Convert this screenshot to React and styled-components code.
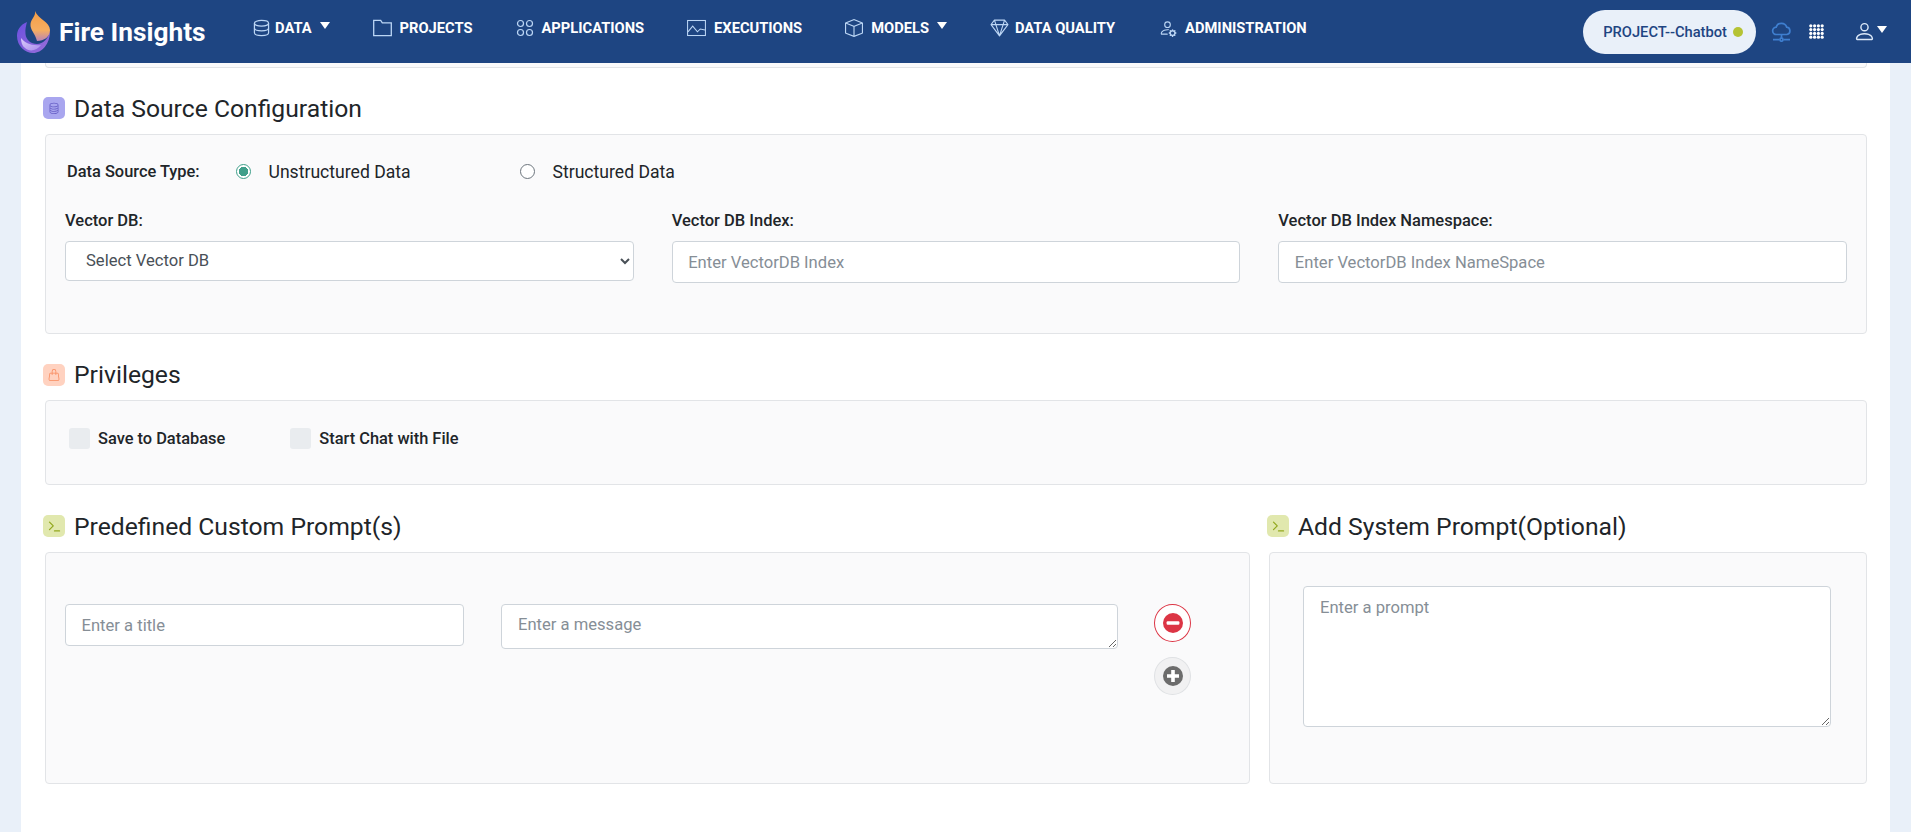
import React from 'react'
import styled, { createGlobalStyle } from 'styled-components'
import { BsBox, BsGem, BsPersonGear, BsPerson, BsHandbag, BsDatabase } from 'react-icons/bs'
import { Terminal } from 'lucide-react'

const GlobalStyle = createGlobalStyle`
  html, body {
    margin: 0;
    height: 100%;
    overflow: hidden;
    background: #e9f0f9;
    font-family: Roboto, "Liberation Sans", sans-serif;
    color: #212529;
  }
  * {
    box-sizing: border-box;
  }
`

function DataIcon() {
  return (
    <svg viewBox="0 0 18 18" fill="none" stroke="currentColor" strokeWidth="1.3">
      <ellipse cx="9" cy="4" rx="7.5" ry="3" />
      <path d="M1.5 4v10c0 1.7 3.4 3 7.5 3s7.5-1.3 7.5-3V4" />
      <path d="M1.5 9c0 1.7 3.4 3 7.5 3s7.5-1.3 7.5-3" />
    </svg>
  )
}

function FolderIcon() {
  return (
    <svg viewBox="0 0 19 18" fill="none" stroke="currentColor" strokeWidth="1.3">
      <path d="M.7 16.6V1.4h7l1.6 2.4h9v12.8z" />
    </svg>
  )
}

function AppsIcon() {
  return (
    <svg viewBox="0 0 18 18" fill="none" stroke="currentColor" strokeWidth="1.2">
      <circle cx="4.5" cy="4.5" r="3" />
      <circle cx="13.5" cy="4.5" r="3" />
      <circle cx="4.5" cy="13.5" r="3" />
      <circle cx="13.5" cy="13.5" r="3" />
    </svg>
  )
}

function ChartIcon() {
  return (
    <svg viewBox="0 0 20 18" fill="none" stroke="currentColor" strokeWidth="1.1">
      <rect x="0.6" y="1.1" width="18.8" height="15.8" />
      <path d="M1 13l5-6 5 6 3-3 5 1" />
    </svg>
  )
}

function MinusIcon() {
  return (
    <svg viewBox="0 0 20 20">
      <circle cx="10" cy="10" r="10" fill="currentColor" />
      <rect x="3.600" y="8.200" width="12.800" height="3.600" rx="1" fill="#fff" />
    </svg>
  )
}

function PlusIcon() {
  return (
    <svg viewBox="0 0 20 20">
      <circle cx="10" cy="10" r="10" fill="currentColor" />
      <path d="M8.200 4h3.600v4.200H16v3.600h-4.200V16H8.200v-4.200H4V8.200h4.200z" fill="#fff" />
    </svg>
  )
}

const navItems = [
  { label: 'Data', icon: <DataIcon />, caret: true, iconWidth: 17, iconGap: 5 },
  { label: 'Projects', icon: <FolderIcon />, iconWidth: 19, iconGap: 8 },
  { label: 'Applications', icon: <AppsIcon />, iconWidth: 18, iconGap: 8 },
  { label: 'Executions', icon: <ChartIcon />, iconWidth: 19, iconGap: 8 },
  { label: 'Models', icon: <BsBox />, caret: true, iconWidth: 18, iconGap: 8 },
  { label: 'Data Quality', icon: <BsGem />, iconWidth: 19, iconGap: 6 },
  { label: 'Administration', icon: <BsPersonGear />, iconWidth: 19, iconGap: 8 },
]

function Logo() {
  return (
    <LogoMark viewBox="0 0 33 42">
      <defs>
        <linearGradient id="flameTop" x1="0.5" y1="0" x2="0.5" y2="1">
          <stop offset="0" stopColor="#f59d45" />
          <stop offset="0.65" stopColor="#f5ad62" />
          <stop offset="1" stopColor="#b884b8" />
        </linearGradient>
        <linearGradient id="flameBody" x1="0" y1="0" x2="1" y2="1">
          <stop offset="0" stopColor="#6a4fe0" />
          <stop offset="1" stopColor="#9a6fd8" />
        </linearGradient>
        <linearGradient id="flameFacet" x1="0" y1="0" x2="1" y2="1">
          <stop offset="0" stopColor="#d9ccfa" />
          <stop offset="1" stopColor="#a98cec" />
        </linearGradient>
      </defs>
      <path d="M10 11C3 14 0 19 0 25c0 10 8 17 16 17c9 0 17-9 17-22c-2 8-7 13-13 13c-6 0-11-4-11.500-10C8 18 9 15 10 11z" fill="url(#flameBody)" />
      <path d="M4 27c4 5 10 8 20 7c-4 6-12 7-16 3c-3-2-4-6-4-10z" fill="url(#flameFacet)" />
      <path d="M18 0c1 5-4 8-4.500 13C13 19 18 22 20 30c7 0 13-4 13-11c0-8-12-11-15-19z" fill="url(#flameTop)" />
    </LogoMark>
  )
}

function CloudIcon() {
  return (
    <CloudMark width="21" height="20" viewBox="0 0 21 20" fill="none" stroke="#3f7fd0" strokeWidth="1.7">
      <path d="M5.500 12.500a3.700 3.700 0 0 1-.3-7.400A5.500 5.500 0 0 1 15.700 5.200a3.700 3.700 0 0 1 .2 7.300z" />
      <path d="M10.500 12.500v3.500M2 17.700h6.500M12.500 17.700H19" />
      <circle cx="10.500" cy="17.700" r="1.500" />
    </CloudMark>
  )
}

function DotsIcon() {
  const dots = []
  for (let y = 0; y < 4; y++) {
    for (let x = 0; x < 4; x++) {
      dots.push(<circle key={`${x}-${y}`} cx={1.8 + x * 3.8} cy={1.8 + y * 3.8} r="1.6" />)
    }
  }
  return (
    <svg width="15" height="15" viewBox="0 0 15 15" fill="#fff">
      {dots}
    </svg>
  )
}

function SectionTitle({ tone, icon, children }) {
  return (
    <Heading>
      <HeadingIcon $tone={tone}>{icon}</HeadingIcon>
      {children}
    </Heading>
  )
}

export default function App() {
  return (
    <>
      <GlobalStyle />
      <Header>
        <Brand>
          <Logo />
          Fire Insights
        </Brand>
        <Nav>
          {navItems.map((item) => (
            <NavItem key={item.label}>
              <NavIcon $width={item.iconWidth} $gap={item.iconGap}>{item.icon}</NavIcon>
              {item.label}
              {item.caret && <Caret />}
            </NavItem>
          ))}
        </Nav>
        <HeaderRight>
          <ProjectPill>
            PROJECT--Chatbot
            <StatusDot />
          </ProjectPill>
          <CloudIcon />
          <DotsIcon />
          <UserMenu>
            <BsPerson />
            <Caret />
          </UserMenu>
        </HeaderRight>
      </Header>
      <Main>
        <TopCardEdge />

        <Section $top={29}>
          <SectionTitle tone="purple" icon={<BsDatabase />}>Data Source Configuration</SectionTitle>
          <Card $height={200}>
            <TypeRow>
              <TypeLabel>Data Source Type:</TypeLabel>
              <RadioOption $width={284}>
                <Radio type="radio" name="source" defaultChecked />
                Unstructured Data
              </RadioOption>
              <RadioOption>
                <Radio type="radio" name="source" />
                Structured Data
              </RadioOption>
            </TypeRow>
            <FieldGrid>
              <Field>
                <FieldLabel>Vector DB:</FieldLabel>
                <Select defaultValue="">
                  <option value="">Select Vector DB</option>
                </Select>
              </Field>
              <Field>
                <FieldLabel>Vector DB Index:</FieldLabel>
                <Input placeholder="Enter VectorDB Index" />
              </Field>
              <Field>
                <FieldLabel>Vector DB Index Namespace:</FieldLabel>
                <Input placeholder="Enter VectorDB Index NameSpace" />
              </Field>
            </FieldGrid>
          </Card>
        </Section>

        <Section $top={30}>
          <SectionTitle tone="orange" icon={<BsHandbag />}>Privileges</SectionTitle>
          <Card $height={85}>
            <CheckRow>
              <CheckOption>
                <Check type="checkbox" />
                Save to Database
              </CheckOption>
              <CheckOption>
                <Check type="checkbox" />
                Start Chat with File
              </CheckOption>
            </CheckRow>
          </Card>
        </Section>

        <PromptGrid>
          <Section>
            <SectionTitle tone="green" icon={<Terminal />}>Predefined Custom Prompt(s)</SectionTitle>
            <PromptCard>
              <TitleInput placeholder="Enter a title" />
              <MessageInput placeholder="Enter a message" />
              <RowButtons>
                <RoundButton $danger>
                  <MinusIcon />
                </RoundButton>
                <RoundButton>
                  <PlusIcon />
                </RoundButton>
              </RowButtons>
            </PromptCard>
          </Section>
          <Section>
            <SectionTitle tone="green" icon={<Terminal />}>Add System Prompt(Optional)</SectionTitle>
            <SystemCard>
              <SystemInput placeholder="Enter a prompt" />
            </SystemCard>
          </Section>
        </PromptGrid>
      </Main>
    </>
  )
}

const Header = styled.header`
  display: flex;
  align-items: center;
  height: 63px;
  padding: 0 24px 0 17px;
  background: #1e4582;
  color: #fff;
`

const Brand = styled.div`
  display: flex;
  align-items: center;
  gap: 9px;
  width: 236px;
  font-size: 26.3px;
  font-weight: 700;
  white-space: nowrap;
`

const LogoMark = styled.svg`
  width: 33px;
  height: 42px;
  flex: none;
`

const Nav = styled.nav`
  display: flex;
  align-items: center;
  gap: 43px;
  margin-top: -8px;
`

const NavItem = styled.a`
  display: flex;
  align-items: center;
  font-size: 14.7px;
  font-weight: 700;
  text-transform: uppercase;
  white-space: nowrap;
`

const NavIcon = styled.span`
  display: flex;
  margin-right: ${(p) => p.$gap}px;
  color: #bcd6f5;
  svg {
    width: ${(p) => p.$width}px;
    height: 18px;
  }
`

const Caret = styled.span`
  width: 0;
  height: 0;
  margin: -5px 0 0 8px;
  border-left: 5px solid transparent;
  border-right: 5px solid transparent;
  border-top: 7px solid #fff;
`

const HeaderRight = styled.div`
  display: flex;
  align-items: center;
  margin-left: auto;
  gap: 14.5px;
`

const ProjectPill = styled.div`
  display: flex;
  align-items: center;
  gap: 6px;
  height: 44px;
  padding: 0 13px 0 20px;
  border-radius: 22px;
  background: #e9f0f9;
  color: #1e4582;
  font-size: 14.7px;
  font-weight: 500;
`

const CloudMark = styled.svg`
  margin-right: 2.5px;
`

const StatusDot = styled.span`
  width: 10px;
  height: 10px;
  border-radius: 50%;
  background: #b5c334;
`

const UserMenu = styled.div`
  display: flex;
  align-items: center;
  margin-left: 15px;
  svg {
    width: 23px;
    height: 23px;
    color: #dbe8f8;
  }
  span {
    margin-left: 1px;
  }
`

const Main = styled.main`
  height: calc(100vh - 63px);
  margin: 0 21px;
  padding: 0 23px 0 24px;
  background: #fff;
`

const TopCardEdge = styled.div`
  height: 5px;
  border: 1px solid #e2e4e7;
  border-top: 0;
  border-radius: 0 0 4px 4px;
  background: #fafafb;
`

const Section = styled.section`
  margin-top: ${(p) => p.$top || 0}px;
`

const Heading = styled.h2`
  display: flex;
  align-items: center;
  gap: 9px;
  height: 22px;
  margin: 0 0 14.5px -2px;
  font-size: 24.7px;
  font-weight: 400;
  color: #212529;
  white-space: nowrap;
`

const toneColors = {
  purple: ['#a9a6ef', '#6a62c8'],
  orange: ['#ffd2c0', '#f98a5c'],
  green: ['#e1e8ae', '#93a81e'],
}

const HeadingIcon = styled.span`
  display: flex;
  align-items: center;
  justify-content: center;
  width: 22px;
  height: 22px;
  border-radius: 5px;
  background: ${(p) => toneColors[p.$tone][0]};
  color: ${(p) => toneColors[p.$tone][1]};
  svg {
    width: ${(p) => (p.$tone === 'green' ? 15 : 12)}px;
    height: ${(p) => (p.$tone === 'green' ? 15 : 12)}px;
  }
`

const Card = styled.div`
  height: ${(p) => p.$height}px;
  border: 1px solid #e2e4e7;
  border-radius: 4px;
  background: #fafafb;
`

const TypeRow = styled.div`
  display: flex;
  align-items: center;
  height: 24px;
  margin: 25px 0 0 21px;
`

const TypeLabel = styled.span`
  width: 169px;
  font-size: 16.4px;
  font-weight: 500;
  white-space: nowrap;
`

const RadioOption = styled.label`
  display: flex;
  align-items: center;
  gap: 17.5px;
  width: ${(p) => (p.$width ? `${p.$width}px` : 'auto')};
  font-size: 17.6px;
`

const Radio = styled.input`
  appearance: none;
  width: 15px;
  height: 15px;
  margin: 0;
  border: 1px solid #6c757d;
  border-radius: 50%;
  background: #fff;
  &:checked {
    border-color: #3f9f8a;
    background: radial-gradient(circle, #3f9f8a 0 4.5px, #fff 5px);
  }
`

const FieldGrid = styled.div`
  display: grid;
  grid-template-columns: repeat(3, 1fr);
  gap: 38px;
  margin: 26px 19px 0;
`

const Field = styled.div`
  display: flex;
  flex-direction: column;
  align-items: stretch;
`

const FieldLabel = styled.label`
  height: 22px;
  margin-bottom: 9px;
  font-size: 16.5px;
  line-height: 22px;
  font-weight: 500;
  white-space: nowrap;
`

const controlStyle = `
  border: 1px solid #ced4da;
  border-radius: 4px;
  background: #fff;
  color: #495057;
  font-family: Roboto, "Liberation Sans", sans-serif;
  font-size: 16.6px;
  outline: none;
  &::placeholder {
    color: #868e96;
    opacity: 1;
  }
`

const Select = styled.select`
  ${controlStyle}
  height: 40px;
  padding: 0 0 0 16px;
`

const Input = styled.input`
  ${controlStyle}
  height: 42px;
  padding: 1px 15.5px 0;
`

const CheckRow = styled.div`
  display: flex;
  gap: 65px;
  margin: 27px 0 0 23px;
`

const CheckOption = styled.label`
  display: flex;
  align-items: center;
  gap: 8px;
  font-size: 16.4px;
  font-weight: 500;
  white-space: nowrap;
`

const Check = styled.input`
  appearance: none;
  width: 21px;
  height: 21px;
  margin: 0;
  border-radius: 3px;
  background: #e9ecef;
`

const PromptGrid = styled.div`
  display: grid;
  grid-template-columns: 1205px 598px;
  gap: 19px;
  margin-top: 30px;
`

const PromptCard = styled.div`
  display: flex;
  align-items: flex-start;
  height: 232px;
  padding: 51.5px 0 0 19px;
  border: 1px solid #e2e4e7;
  border-radius: 4px;
  background: #fafafb;
`

const TitleInput = styled.input`
  ${controlStyle}
  width: 399px;
  height: 42px;
  padding: 0 15.5px;
`

const MessageInput = styled.textarea`
  ${controlStyle}
  width: 617px;
  height: 45px;
  margin-left: 37px;
  padding: 10px 16px;
  resize: both;
`

const RowButtons = styled.div`
  display: flex;
  flex-direction: column;
  gap: 15px;
  margin-left: 36px;
`

const RoundButton = styled.button`
  display: flex;
  align-items: center;
  justify-content: center;
  width: 37px;
  height: 38px;
  padding: 0;
  border: 1px solid ${(p) => (p.$danger ? '#dc3545' : '#dfe1e4')};
  border-radius: 50%;
  background: ${(p) => (p.$danger ? '#fff' : '#f1f1f2')};
  color: ${(p) => (p.$danger ? '#dc3545' : '#6c6c6c')};
  svg {
    width: 20px;
    height: 20px;
  }
`

const SystemCard = styled.div`
  height: 232px;
  padding: 33px 35px 0 33px;
  border: 1px solid #e2e4e7;
  border-radius: 4px;
  background: #fafafb;
`

const SystemInput = styled.textarea`
  ${controlStyle}
  display: block;
  width: 100%;
  height: 141px;
  padding: 11px 16px;
  resize: both;
`
